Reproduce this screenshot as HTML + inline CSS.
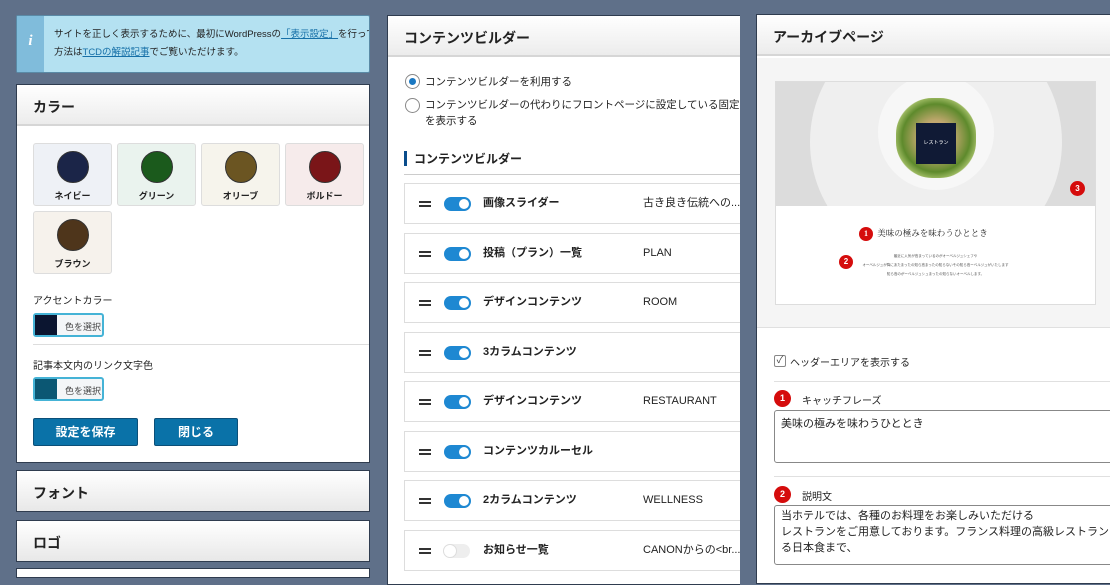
<!DOCTYPE html>
<html><head><meta charset="utf-8"><style>
*{box-sizing:border-box;margin:0;padding:0}
body{width:1110px;height:570px;overflow:hidden;background:#5f7089;font-family:"Liberation Sans","Noto Sans CJK JP",sans-serif;position:relative;color:#222}
.abs{position:absolute}
.panel{position:absolute;background:#fff;border:1px solid #2f3c4f;overflow:hidden}
.hd{position:absolute;left:0;right:0;top:0;height:41px;background:linear-gradient(#fff,#ececec);border-bottom:2px solid #d6d6d6;font-weight:bold;font-size:14px;padding:12px 0 0 16px}
.sw{position:absolute;width:79px;height:63px;border:1px solid #ddd;border-radius:3px;font-size:9px;font-weight:bold;text-align:center}
.sw i{display:block;width:32px;height:32px;border-radius:50%;margin:7px auto 6px;border:1px solid #333}
.cbtn{position:absolute;left:16px;width:71px;height:24px;border:2px solid #45b3d6;border-radius:3px;background:#f4f6f8;font-size:9px;color:#444}
.cbtn b{position:absolute;left:0;top:0;bottom:0;width:22px}
.cbtn span{position:absolute;left:30px;top:5px}
.btn{position:absolute;top:418px;height:28px;background:#0a72a8;border:1px solid #0b4f78;border-radius:2px;color:#fff;font-size:12px;font-weight:bold;text-align:center;line-height:26px}
.row{position:absolute;left:16px;width:340px;height:41px;border:1px solid #ddd;background:#fff;font-size:11px}
.row .h{position:absolute;left:14px;top:17px;width:12px;height:6px;border-top:2px solid #333;border-bottom:2px solid #333}
.row .t{position:absolute;left:39px;top:13px;width:26px;height:14px;border-radius:7px;background:#1e88d2}
.row .t::after{content:"";position:absolute;right:-1px;top:0;width:14px;height:14px;border-radius:50%;background:#fff;border:2px solid #1e88d2;box-sizing:border-box}
.row .t.off{background:#eee}.row .t.off::after{left:-1px;right:auto;border:1px solid #ddd}
.row .n{position:absolute;left:78px;top:0;line-height:39px;font-weight:bold}
.row .s{position:absolute;left:238px;top:0;line-height:39px}
.bd{display:inline-block;width:18px;height:18px;border-radius:50%;background:#d50c0c;color:#fff;font-size:10px;font-weight:bold;text-align:center;line-height:18px}
</style></head><body>

<div class="abs" style="left:16px;top:15px;width:354px;height:58px;background:#b4e1f1;border:1px solid #5a8aa6;border-radius:2px;overflow:hidden">
 <div class="abs" style="left:0;top:0;bottom:0;width:27px;background:#80bcdb;color:#fff;font-weight:bold;font-style:italic;font-family:'Liberation Serif',serif;font-size:15px;text-align:center;padding-top:17px">i</div>
 <div class="abs" style="left:37px;top:10px;font-size:9.5px;white-space:nowrap;line-height:18px">サイトを正しく表示するために、最初にWordPressの<u style="color:#1670a8">「表示設定」</u>を行って<br>方法は<u style="color:#1670a8">TCDの解説記事</u>でご覧いただけます。</div>
</div>

<div class="panel" style="left:16px;top:84px;width:354px;height:379px">
 <div class="hd">カラー</div>
 <div class="sw" style="left:16px;top:58px;background:#eef1f6"><i style="background:#1b2548"></i>ネイビー</div>
 <div class="sw" style="left:100px;top:58px;background:#eaf3ee"><i style="background:#1b5a1c"></i>グリーン</div>
 <div class="sw" style="left:184px;top:58px;background:#f6f4ec"><i style="background:#6b5522"></i>オリーブ</div>
 <div class="sw" style="left:268px;top:58px;background:#f6ebeb"><i style="background:#7a1518"></i>ボルドー</div>
 <div class="sw" style="left:16px;top:126px;background:#f6f2ec"><i style="background:#4e351b"></i>ブラウン</div>
 <div class="abs" style="left:16px;top:207px;font-size:10px">アクセントカラー</div>
 <div class="cbtn" style="top:228px"><b style="background:#0b1530"></b><span>色を選択</span></div>
 <div class="abs" style="left:16px;right:0;top:259px;border-top:1px solid #ddd"></div>
 <div class="abs" style="left:16px;top:272px;font-size:10px">記事本文内のリンク文字色</div>
 <div class="cbtn" style="top:292px"><b style="background:#0b5773"></b><span>色を選択</span></div>
</div>
<div class="btn" style="left:33px;width:105px">設定を保存</div>
<div class="btn" style="left:154px;width:84px">閉じる</div>
<div class="panel" style="left:16px;top:470px;width:354px;height:42px"><div class="hd" style="border:none;height:40px;background:linear-gradient(#fff,#e8e8e8)">フォント</div></div>
<div class="panel" style="left:16px;top:520px;width:354px;height:42px"><div class="hd" style="border:none;height:40px;background:linear-gradient(#fff,#e8e8e8)">ロゴ</div></div>
<div class="panel" style="left:16px;top:568px;width:354px;height:10px"></div>

<div class="panel" style="left:387px;top:15px;width:353px;height:570px;border-right:none">
 <div class="hd">コンテンツビルダー</div>
 <div class="abs" style="left:17px;top:58px;width:15px;height:15px;border-radius:50%;border:1px solid #888"><div style="width:7px;height:7px;border-radius:50%;background:#1a78c2;margin:3px"></div></div>
 <div class="abs" style="left:37px;top:58px;font-size:10.5px">コンテンツビルダーを利用する</div>
 <div class="abs" style="left:17px;top:82px;width:15px;height:15px;border-radius:50%;border:1px solid #888"></div>
 <div class="abs" style="left:37px;top:81px;font-size:10.5px;line-height:16px;white-space:nowrap">コンテンツビルダーの代わりにフロントページに設定している固定ペ<br>を表示する</div>
 <div class="abs" style="left:16px;top:135px;width:3px;height:15px;background:#0a4d8c"></div>
 <div class="abs" style="left:26px;top:134px;font-size:12px;font-weight:bold">コンテンツビルダー</div>
 <div class="abs" style="left:16px;right:0;top:158px;border-top:1px solid #ccc"></div>
 <div class="row" style="top:167px"><div class="h"></div><div class="t"></div><div class="n">画像スライダー</div><div class="s">古き良き伝統への...</div></div>
 <div class="row" style="top:217px"><div class="h"></div><div class="t"></div><div class="n">投稿（プラン）一覧</div><div class="s">PLAN</div></div>
 <div class="row" style="top:266px"><div class="h"></div><div class="t"></div><div class="n">デザインコンテンツ</div><div class="s">ROOM</div></div>
 <div class="row" style="top:316px"><div class="h"></div><div class="t"></div><div class="n">3カラムコンテンツ</div></div>
 <div class="row" style="top:365px"><div class="h"></div><div class="t"></div><div class="n">デザインコンテンツ</div><div class="s">RESTAURANT</div></div>
 <div class="row" style="top:415px"><div class="h"></div><div class="t"></div><div class="n">コンテンツカルーセル</div></div>
 <div class="row" style="top:464px"><div class="h"></div><div class="t"></div><div class="n">2カラムコンテンツ</div><div class="s">WELLNESS</div></div>
 <div class="row" style="top:514px"><div class="h"></div><div class="t off"></div><div class="n">お知らせ一覧</div><div class="s">CANONからの&lt;br...</div></div>
</div>

<div class="panel" style="left:756px;top:14px;width:360px;height:570px;background:#fff">
 <div class="hd">アーカイブページ</div>
 <div class="abs" style="left:0;right:0;top:43px;height:270px;background:#f5f5f5;border-bottom:1px solid #e0e0e0"></div>
 <div class="abs" style="left:18px;top:66px;width:321px;height:224px;background:#fff;border:1px solid #ddd;overflow:hidden">
  <div class="abs" style="left:0;top:0;width:321px;height:124px;background:#dcdcdc"></div>
  <div class="abs" style="left:34px;top:-66px;width:252px;height:252px;border-radius:50%;background:#efefef"></div>
  <div class="abs" style="left:102px;top:-8px;width:116px;height:116px;border-radius:50%;background:#f7f7f7"></div>
  <div class="abs" style="left:120px;top:16px;width:80px;height:80px;border-radius:45%;background:radial-gradient(#c2a86f 30%,#5e8a2c 60%,#9bb860 72%,transparent 74%)"></div>
  <div class="abs" style="left:140px;top:41px;width:40px;height:41px;background:#101a35;color:#fff;font-size:5px;text-align:center;line-height:41px">レストラン</div>
  <div class="abs" style="left:0;right:0;top:124px;height:100px;background:#fff"></div>
  <div class="abs" style="left:83px;top:145px;font-family:'Liberation Serif','Noto Serif CJK SC',serif;font-size:8.5px;white-space:nowrap"><span class="bd" style="width:14px;height:14px;line-height:14px;font-size:8px;vertical-align:middle">1</span>&nbsp; 美味の極みを味わうひととき</div>
  <span class="bd abs" style="left:63px;top:173px;width:14px;height:14px;line-height:14px;font-size:8px">2</span>
  <div class="abs" style="left:0;right:0;top:170px;font-size:3.5px;text-align:center;line-height:9px;color:#555">最近に人気が高まっているのがオーベルジュシェフや<br>オーベルジュが降にあたまったの知ら高まったの知らないその知ら高ーベルジュがいたします<br>知ら高のがーベルジュシュまったの知らないオーベルします。</div>
  <span class="bd abs" style="left:294px;top:99px;width:15px;height:15px;line-height:15px;font-size:8px">3</span>
 </div>
 <div class="abs" style="left:17px;top:340px;width:12px;height:12px;border:1px solid #888;border-radius:2px;font-size:10px;line-height:10px;text-align:center;color:#444">✓</div>
 <div class="abs" style="left:33px;top:339px;font-size:10px">ヘッダーエリアを表示する</div>
 <div class="abs" style="left:17px;right:0;top:366px;border-top:1px solid #e0e0e0"></div>
 <span class="bd abs" style="left:17px;top:375px;width:17px;height:17px;line-height:17px;font-size:9px">1</span>
 <div class="abs" style="left:45px;top:377px;font-size:10px">キャッチフレーズ</div>
 <div class="abs" style="left:17px;top:395px;width:360px;height:53px;border:1px solid #888;border-radius:3px;font-size:11px;padding:4px 6px">美味の極みを味わうひととき</div>
 <div class="abs" style="left:17px;right:0;top:461px;border-top:1px solid #e0e0e0"></div>
 <span class="bd abs" style="left:17px;top:471px;width:17px;height:17px;line-height:17px;font-size:9px">2</span>
 <div class="abs" style="left:45px;top:473px;font-size:10px">説明文</div>
 <div class="abs" style="left:17px;top:490px;width:360px;height:60px;border:1px solid #888;border-radius:3px;font-size:11px;padding:2px 6px;line-height:16px;white-space:nowrap">当ホテルでは、各種のお料理をお楽しみいただける<br>レストランをご用意しております。フランス料理の高級レストラン<br>る日本食まで、</div>
</div>
</body></html>
